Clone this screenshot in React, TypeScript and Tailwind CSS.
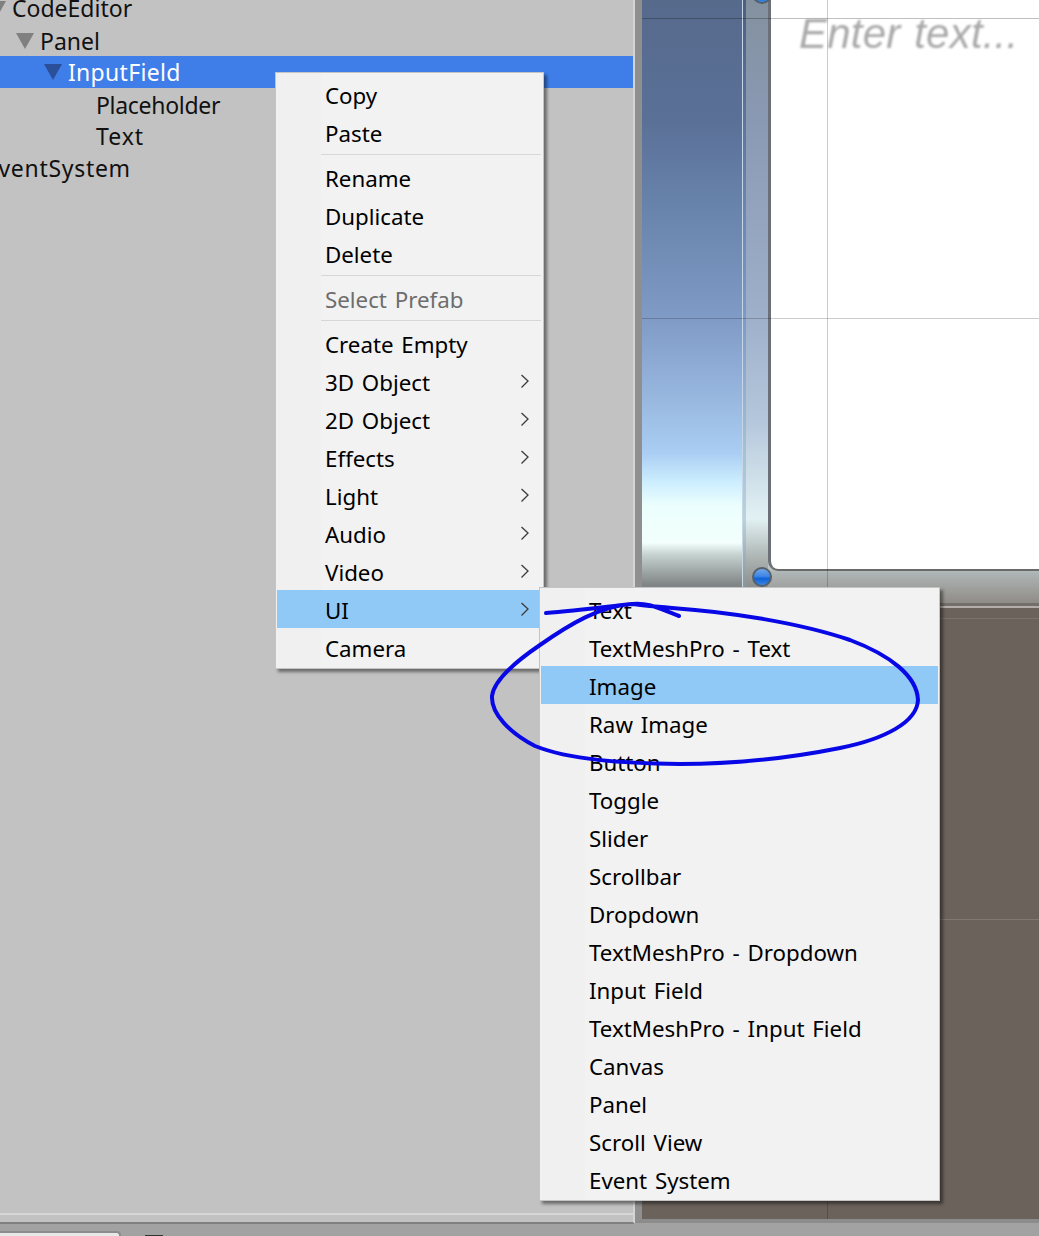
import React from "react";

type Item = { label?: string; sub?: boolean; disabled?: boolean; active?: boolean; sep?: boolean };

const mainMenu: Item[] = [
  { label: "Copy" },
  { label: "Paste" },
  { sep: true },
  { label: "Rename" },
  { label: "Duplicate" },
  { label: "Delete" },
  { sep: true },
  { label: "Select Prefab", disabled: true },
  { sep: true },
  { label: "Create Empty" },
  { label: "3D Object", sub: true },
  { label: "2D Object", sub: true },
  { label: "Effects", sub: true },
  { label: "Light", sub: true },
  { label: "Audio", sub: true },
  { label: "Video", sub: true },
  { label: "UI", sub: true, active: true },
  { label: "Camera" },
];

const uiMenu: Item[] = [
  { label: "Text" },
  { label: "TextMeshPro - Text" },
  { label: "Image", active: true },
  { label: "Raw Image" },
  { label: "Button" },
  { label: "Toggle" },
  { label: "Slider" },
  { label: "Scrollbar" },
  { label: "Dropdown" },
  { label: "TextMeshPro - Dropdown" },
  { label: "Input Field" },
  { label: "TextMeshPro - Input Field" },
  { label: "Canvas" },
  { label: "Panel" },
  { label: "Scroll View" },
  { label: "Event System" },
];

const Chevron = () => (
  <svg width="10" height="15" viewBox="0 0 10 15" fill="none" stroke="#3c3c3c" strokeWidth="1.3" className="absolute right-[12px] top-[12px]">
    <path d="M1.5 1 L8 7 L1.5 13.5" />
  </svg>
);

const Triangle = ({ color }: { color: string }) => (
  <svg width="18" height="16" viewBox="0 0 18 16" className="shrink-0">
    <polygon points="0,0 18,0 9,16" fill={color} />
  </svg>
);

function MenuRows({ items }: { items: Item[] }) {
  return (
    <>
      {items.map((item, i) =>
        item.sep ? (
          <div key={i} className="flex h-[7px] items-center pl-[44px] pr-[1px]">
            <div className="h-[1.5px] w-full bg-[#d7d7d7]" />
          </div>
        ) : (
          <div
            key={i}
            className={`relative flex h-[38px] items-center pl-[48px] ${item.active ? "bg-[#90c8f6]" : ""} ${
              item.disabled ? "text-[#6d6d6d]" : "text-black"
            }`}
          >
            <span className="relative top-[2px]">{item.label}</span>
            {item.sub && <Chevron />}
          </div>
        )
      )}
    </>
  );
}

function Handle({ className }: { className: string }) {
  return (
    <div className={`absolute h-[20px] w-[20px] rounded-full border-[2px] border-[#55606c] bg-[linear-gradient(#6ea6ea_0%,#3f86e4_45%,#0f62d8_60%,#3d86e0_100%)] ${className}`} />
  );
}

export default function App() {
  return (
    <div className="relative flex h-[1236px] w-[1039px] flex-col overflow-hidden bg-[#a2a2a2] font-['Noto_Sans',sans-serif] text-[22.3px] leading-none [word-spacing:2px]">
      <div className="flex h-[1224px] shrink-0">
        {/* Hierarchy */}
        <div className="h-full w-[635px] shrink-0 border-b-[2px] border-r-[2px] border-b-[#808080] border-r-[#d4d4d4] bg-[#c2c2c2]">
          <div className="h-full border-b-[2px] border-b-[#d6d6d6] text-[23px] text-[#111]">
            <div className="-ml-[12px] -mt-[7px] flex h-[32px] items-center gap-[6px]">
              <Triangle color="#808080" />
              <span className="relative -top-[1px]">CodeEditor</span>
            </div>
            <div className="flex h-[32px] items-center gap-[6px] pl-[16px]">
              <Triangle color="#808080" />
              <span>Panel</span>
            </div>
            <div className="-mt-[1px] flex h-[32px] items-center gap-[6px] bg-[#3f7de8] pl-[44px]">
              <Triangle color="#2b4f99" />
              <span className="tracking-[0.3px] text-white">InputField</span>
            </div>
            <div className="flex h-[32px] items-center pl-[96px] tracking-[-0.3px]">
              <span className="relative top-[1px]">Placeholder</span>
            </div>
            <div className="flex h-[32px] items-center pl-[96px] tracking-[1px]">Text</div>
            <div className="-ml-[15px] flex h-[32px] items-center tracking-[0.7px]">EventSystem</div>
          </div>
        </div>

        {/* Scene view */}
        <div className="relative flex h-[1223px] flex-1 flex-col overflow-hidden border-b-[4px] border-l-[7px] border-b-[#8c8c8c] border-l-[#8f8f8f] bg-[#6b625c]">
          <div className="flex h-[603px] shrink-0">
            <div className="w-[100px] shrink-0 bg-[linear-gradient(#566a8c_0%,#5a7097_20%,#6a86ae_36%,#7f9bc6_53%,#98b7df_66%,#a9cdf3_75%,#cdeefe_80%,#ecfffd_84%,#f2fffc_90%,#c5d2cf_92%,#808585_97%)]" />
            <div className="w-[4px] shrink-0 border-l border-l-[#c9d6e8] bg-[linear-gradient(#4b5f82,#7b99c6_52%,#b8d4dc_86%,#7f8583)]" />
            <div className="w-[22px] shrink-0 bg-[linear-gradient(#83919f_0%,#8a99b3_20%,#9eafca_52%,#b5c7dc_70%,#e2f1f3_86%,#a9b0ae_93%,#8f9190_97%)]" />
            <div className="flex-1 bg-[linear-gradient(#c0c8c8_0%,#c0c8c8_94%,#aeb5b5_95%,#908c88_100%)]">
              <div className="h-[571px] rounded-bl-[10px] border-b-[2px] border-l-[3px] border-b-[#6a6a6a] border-l-[#6d7076] bg-white" />
            </div>
          </div>
          <div className="h-[3px] shrink-0 bg-[#756f6a]" />
          <div className="h-[2px] shrink-0 bg-[#b3aea9]" />
          <div className="h-[10px] shrink-0" />
          <div className="h-[1px] shrink-0 bg-[#7a726d]" />
          <div className="h-[300px] shrink-0" />
          <div className="h-[1px] shrink-0 bg-[#7f7873]" />

          {/* scene grid lines, label and rect handles sit on top of the canvas */}
          <div className="absolute inset-x-0 top-[18px] h-[1px] bg-black/25" />
          <div className="absolute inset-x-0 top-[318px] h-[1px] bg-black/20" />
          <div className="absolute bottom-0 left-[185px] top-0 w-[1px] bg-black/20" />
          <span className="absolute left-[157px] top-[13px] whitespace-nowrap font-['Liberation_Sans',sans-serif] text-[42px] italic tracking-[0.2px] text-[#a9a9a9] blur-[1px]">
            Enter text...
          </span>
          <Handle className="left-[110px] top-[-16px]" />
          <Handle className="left-[110px] top-[567px]" />
        </div>
      </div>

      {/* Bottom strip */}
      <div className="flex flex-1 items-start gap-[24px] pt-[7px]">
        <div className="h-[12px] w-[121px] rounded-tr-[4px] border-r-[2px] border-t-[2px] border-[#8c8c8c] bg-[#e8e8e8]" />
        <div className="mt-[4px] h-[3px] w-[18px] bg-[#333]" />
      </div>

      {/* Context menu */}
      <div className="absolute left-[275px] top-[72px] h-[597px] w-[269px] border border-[#c4c4c4] bg-[linear-gradient(90deg,#f0f0f0_45px,#f2f2f2_45px)] p-[1px] py-[2px] shadow-[3px_3px_3px_rgba(0,0,0,0.45)]">
        <MenuRows items={mainMenu} />
      </div>

      {/* UI submenu */}
      <div className="absolute left-[539px] top-[587px] h-[614px] w-[401px] border border-[#c4c4c4] bg-[linear-gradient(90deg,#f0f0f0_45px,#f2f2f2_45px)] px-[1px] py-[2px] shadow-[3px_3px_3px_rgba(0,0,0,0.45)]">
        <MenuRows items={uiMenu} />
      </div>

      {/* Hand-drawn annotation */}
      <svg className="pointer-events-none absolute left-0 top-0" width="1039" height="1236" viewBox="0 0 1039 1236" fill="none">
        <path
          d="M546 613 C572 611 605 607 632 604 C648 602 660 609 679 616 M632 604 C600 606 570 624 540 645 C515 662 494 680 492 696 C491 714 510 733 535 746 C570 760 620 763 680 764 C730 764 790 758 840 748 C885 739 917 722 918 700 C917 676 890 655 850 640 C800 623 730 612 672 608 C650 606 640 605 632 604"
          stroke="#0808e6"
          strokeWidth="4"
          strokeLinecap="round"
          strokeLinejoin="round"
        />
      </svg>
    </div>
  );
}
